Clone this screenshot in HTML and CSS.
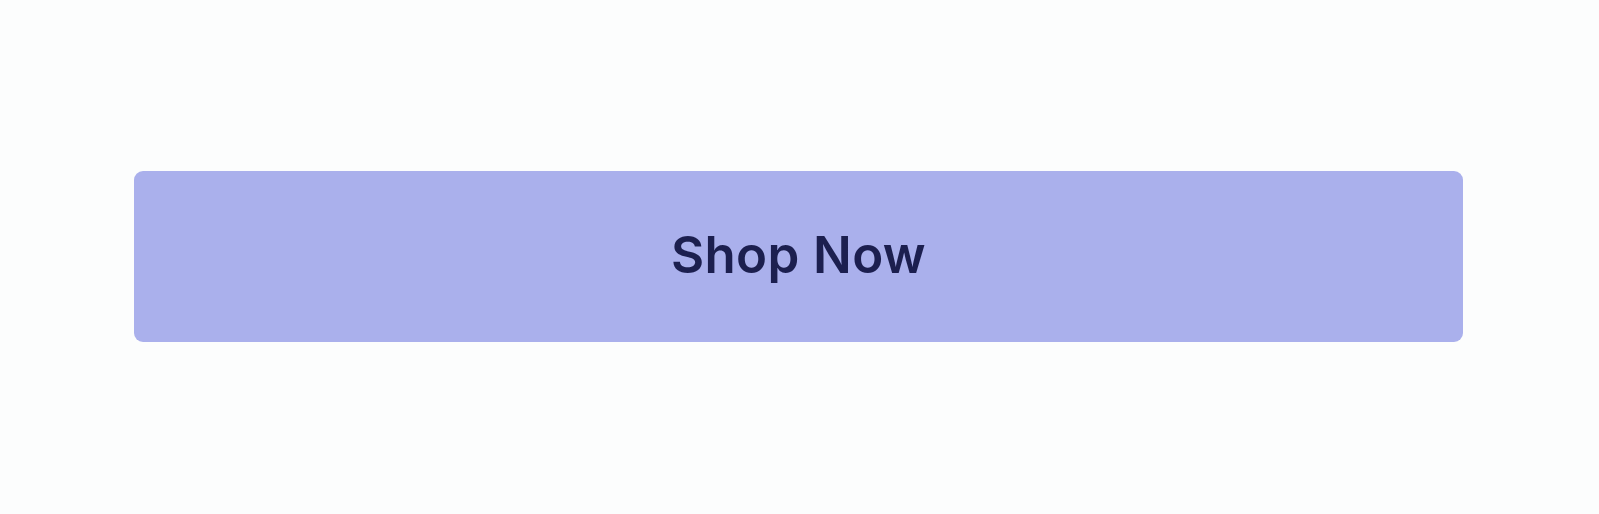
FILE: index.html
```html
<!DOCTYPE html>
<html lang="en">
<head>
<meta charset="utf-8">
<title>Shop Now</title>
<link rel="stylesheet" href="styles.css">
</head>
<body>
<main class="page">
  <button class="cta" type="button">Shop Now</button>
</main>
</body>
</html>
```
FILE: styles.css
```css
html, body {
  margin: 0;
  padding: 0;
  background: #fcfdfd;
}
.page {
  width: 1599px;
  height: 514px;
  box-sizing: border-box;
  padding: 171px 136px 0 134px;
}
.cta {
  display: flex;
  align-items: center;
  justify-content: center;
  width: 100%;
  height: 171px;
  border: none;
  border-radius: 9px;
  background: #aab0ec;
  color: #1c1f4f;
  font-family: "Inter", "Liberation Sans", Arial, sans-serif;
  font-weight: 600;
  font-size: 51px;
  letter-spacing: 0.4px;
  padding: 0 0 4px 0;
  margin: 0;
  cursor: pointer;
}
```
